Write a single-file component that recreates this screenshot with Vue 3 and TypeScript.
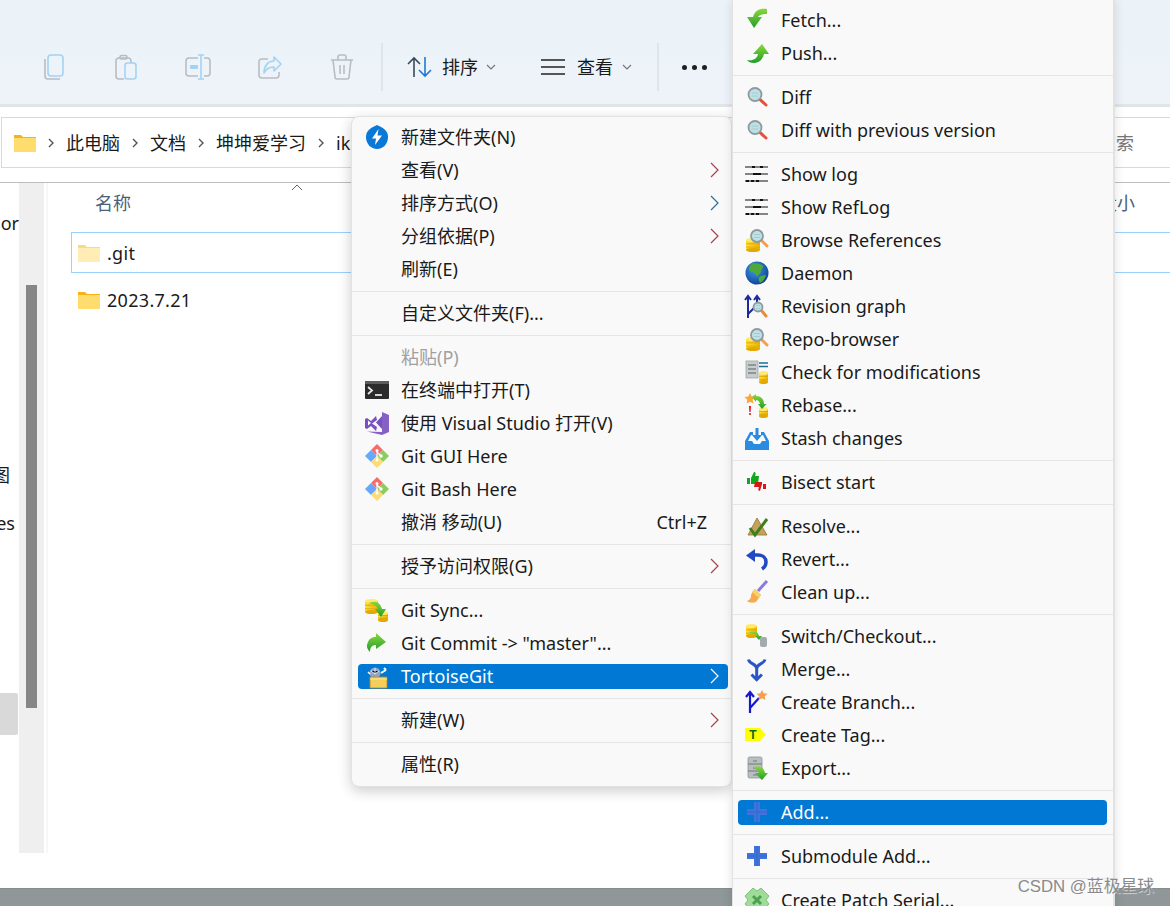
<script setup lang="ts">
interface Row {
  label?: string
  icon?: string
  arrow?: string
  keys?: string
  off?: boolean
  on?: boolean
  sep?: boolean
}

const db = (x: number, y: number, w: number, h: number) =>
  `<rect x="${x}" y="${y + 2}" width="${w}" height="${h - 3}" fill="url(#g-yellow)"/>` +
  `<ellipse cx="${x + w / 2}" cy="${y + h - 1}" rx="${w / 2}" ry="2" fill="#e3a900"/>` +
  `<ellipse cx="${x + w / 2}" cy="${y + 2}" rx="${w / 2}" ry="2" fill="#ffe970"/>` +
  `<path d="M${x} ${y + h * 0.45}h${w}M${x} ${y + h * 0.7}h${w}" stroke="#d9a200" stroke-width=".8"/>`

const lens = (cx: number, cy: number, r: number, handle: string, ex: number, ey: number) =>
  `<path d="M${cx + r * 0.7} ${cy + r * 0.7}L${ex} ${ey}" stroke="${handle}" stroke-width="3" stroke-linecap="round"/>` +
  `<circle cx="${cx}" cy="${cy}" r="${r}" fill="#bfe0e4" stroke="#8d9a9e" stroke-width="1.8"/>` +
  `<path d="M${cx - r * 0.5} ${cy - 1.5}h${r}M${cx - r * 0.5} ${cy + 1.5}h${r}" stroke="#9cc6cc" stroke-width=".8"/>`

const gitMark =
  '<path d="M12 12L6 6 0 12l6 6z" fill="#67a8ff"/><path d="M6 6l6 6 6-6-6-6z" fill="#f56c6c"/>' +
  '<path d="M12 12l6-6 6 6-6 6z" fill="#8ccb5e"/><path d="M6 18l6-6 6 6-6 6z" fill="#fddc75"/>' +
  '<circle cx="12" cy="6.5" r="1.5" fill="#fff"/><circle cx="16" cy="12" r="1.7" fill="#fff"/><circle cx="12" cy="16" r="1.5" fill="#fff"/>' +
  '<path d="M12 7v8M12 8l4 4" stroke="#fff" stroke-width="1.2"/>'

const plus = '<path d="M9 2h6v7h7v6h-7v7H9v-7H2V9h7z" fill="#3f74dc"/><path d="M2 12h20M12 2v20" stroke="#2f5fc4" stroke-width="1" opacity=".5"/>'

const logLines =
  '<path d="M0 5h23M0 12h23M0 19h23" stroke="#111" stroke-width="1"/>' +
  '<path d="M7 5h3M15 5h3M8 12h8M1 19h3M6 19h3M11 19h3" stroke="#111" stroke-width="2.200"/>'

const icons: Record<string, string> = {
  bolt: '<path d="M12 0l4 2c4 2 7 5 7 10 0 7-5 12-11 12S1 19 1 12c0-5 3-8 7-10z" fill="#0a78d7"/><path d="M13.500 4L7 13.500h4L10 20l7-9.500h-4.500z" fill="#fff"/>',
  term: '<rect y="3" width="24" height="18" rx="1" fill="#2b2b2b"/><path d="M0 4a1 1 0 0 1 1-1h22a1 1 0 0 1 1 1v2H0z" fill="#5c5c5c"/><path d="M3 9l4 3.500-4 3.500" fill="none" stroke="#e8e8e8" stroke-width="1.800"/><path d="M10 17h7" stroke="#e8e8e8" stroke-width="1.800"/>',
  vs: '<path d="M17 1l7 3v17l-7 3-15-3.500L17 21z" fill="#8661c5"/><path d="M17 5v13l-6-6.500zM0 8l2-1 4 3 5-5 1 4-5 3.500 5 3.500-1 4-5-5-4 3-2-1z" fill="#7a4fc0"/><path d="M3 9.500v5l3-2.500z" fill="#fff"/>',
  git: gitMark,
  sync: db(0, 1, 13, 14) + db(13, 13, 10, 10) + '<path d="M4 5c6-3 11-1 13 6h4l-5 8-6-8h3c-1-3-4-5-9-6z" fill="url(#g-green)"/>',
  commit: '<path d="M11 2l10 9-10 7v-4c-4 0-6 2-6 7-3-3-4-6-2-10 1-3 4-5 8-5z" fill="url(#g-green)"/>',
  tortoise: '<circle cx="10" cy="9" r="5.500" fill="#8fa6c9"/><path d="M6 7l4 3 4-3M10 4v6" stroke="#e8eef6" stroke-width="1"/><path d="M16 9l5-3M19 4l2 2" stroke="#fff" stroke-width="2"/><path d="M3 8l2 2" stroke="#fff" stroke-width="1.500"/><path d="M5 13h17v11H5z" fill="#f3ce5a" stroke="#a98a24" stroke-width=".8"/><path d="M5 15h17" stroke="#ffe88f"/>',
  fetch: '<path d="M22 1c-7-1-12 1-14 8H2l7 11 8-11h-4c1-2 4-3 9-3z" fill="url(#g-green)"/>',
  push: '<path d="M17 3l7 10h-5c-1 5-5 9-10 9-3 0-6-1-7-3 6 1 10-1 11-6h-5z" fill="url(#g-green)"/>',
  diff: lens(10, 9.500, 6.500, '#e5503f', 21, 20),
  log: logLines,
  refs: db(1, 10, 14, 13) + lens(12, 8, 6, '#f0a050', 22, 18),
  globe: '<circle cx="12" cy="12" r="11.500" fill="url(#g-globe)"/><path d="M8 2c3 1 8 0 10 3 1 2-2 3-2 5 0 3-3 3-3 6-2-1-3-4-5-5-2 0-4-1-4-3 0-3 2-4 4-6zM14 16c2-1 5-2 7-2-1 4-3 6-6 8-1-2-2-4-1-6z" fill="#4fa83c"/>',
  graph: '<path d="M3 24V3M0 6l3-4 3 4M12 12V3M9 6l3-4 3 4" fill="none" stroke="#1b2a9c" stroke-width="2"/><path d="M3 20l6-6" stroke="#1b2a9c" stroke-width="2"/>' + lens(13, 13, 4.500, '#e88c3a', 21, 22),
  check: '<rect x="1" y="1" width="12" height="17" fill="#c7ccce" stroke="#a0a6a8" stroke-width=".8"/><path d="M3 5h8M3 9h8M3 13h8" stroke="#7f8587" stroke-width="1.500"/><path d="M14 3h9M14 6.500h9" stroke="#1f6f95" stroke-width="1.600"/>' + db(14, 11, 9, 12),
  rebase: '<path d="M5 0l1.700 3.500 3.800.500-2.800 2.700.7 3.800L5 8.700 1.600 10.500l.7-3.800L-.5 4l3.800-.500z" fill="#f5a93a"/><path d="M4 13h2l-.4 6H4.400zM4.200 20h1.600v2H4.200z" fill="#e01818"/>' + db(14, 14, 9, 10) + '<path d="M7 4l4-3v2c5 0 8 3 8 8h2.500L17 16l-4-5h2c0-2-2-4-4-4v2z" fill="url(#g-green)"/>',
  stash: '<path d="M5 6h3v3H6L3 15v8h18v-8l-3-6h-2V6h3l5 9v9H0v-9z" fill="#2a8be0"/><path d="M0 15h7l2 3h6l2-3h7v8H0z" fill="#2a8be0"/><path d="M10.500 2h3v7h3.500l-5 6-5-6h3.500z" fill="#2a8be0"/>',
  bisect: '<path d="M2 8h3v6H2zM6 8l3-6c2 0 2 2 1 4h4l-1 8H6z" fill="#11a81c"/><path d="M21 14h-3v5h3zM17 14l-2 7c-2 0-2-2-1-4h-5l1-5h7z" fill="#d81818"/>',
  resolve: '<path d="M12 4l10 17H3z" fill="#c5a25a" stroke="#8f7538" stroke-width=".8"/><path d="M5 14l5 7L22 5" fill="none" stroke="#3f7d22" stroke-width="3"/>',
  revert: '<path d="M8 8h5c5 0 8 3 8 7 0 3-1 5-4 7" fill="none" stroke="#2149c2" stroke-width="3.500"/><path d="M1 8.500L10 2v13z" fill="#2149c2"/>',
  clean: '<path d="M22 1L13 11" stroke="#8a79e0" stroke-width="3"/><path d="M10 9l6 6-5 7c-3 1-7 1-9-1 3-1 4-3 4-5 0-3 2-5 4-7z" fill="#f6a94e"/><path d="M10 9l6 6-2 3-7-6z" fill="#f5d36a"/>',
  switch: db(1, 0, 11, 13) + '<rect x="15" y="13" width="7" height="10" rx="2" fill="#a5abad"/><path d="M5 8c5-2 8 0 9 4h3l-3 4-4-4h2c-1-2-4-3-7-3z" fill="url(#g-green)"/>',
  merge: '<path d="M3.500 2.500c1 5 8 4 8.200 9 .2-5 7.300-4 8.300-9M11.700 11v11M6.500 17.500l5.200 5.200 5.200-5.200" fill="none" stroke="#2a55c4" stroke-width="3"/>',
  branch: '<path d="M5 23V3M1 7l4-5 4 5M5 18l9-10" fill="none" stroke="#1518d0" stroke-width="2.200"/><path d="M17 0l1.700 3.300 3.800.500-2.800 2.600.7 3.700L17 8.300l-3.400 1.800.7-3.700-2.800-2.600 3.800-.500z" fill="#f5a050"/>',
  tag: '<path d="M0 5h15l6 6.500-6 6.500H0z" fill="#ffff00"/><text x="8" y="16" font-size="12" font-weight="700" text-anchor="middle" fill="#0b6b1e" font-family="Liberation Sans, sans-serif">T</text>',
  export: '<rect x="3" y="1" width="14" height="21" rx="1.500" fill="#b9bec0" stroke="#8e9496" stroke-width=".8"/><path d="M3 8h14M3 15h14M8 5h4M8 12h4M8 19h4" stroke="#74797b"/><path d="M8 11c6-2 11 0 12 6h3l-6 7-7-7h4c-1-2-3-4-6-6z" fill="url(#g-green)"/>',
  add: plus,
  patch: '<path d="M12 3l4-3 8 8-3 4 3 4-8 8-4-3-4 3-8-8 3-4-3-4 8-8z" fill="#9fdc9a" stroke="#6cb86a" stroke-width=".8"/><path d="M8 8l8 8M16 8l-8 8" stroke="#4fa04f" stroke-width="3"/>',
}

const sep: Row = { sep: true }
const red = '#a8424a'
const blue = '#2c6d9e'

const shellRows: Row[] = [
  { label: '新建文件夹(N)', icon: 'bolt' },
  { label: '查看(V)', arrow: red },
  { label: '排序方式(O)', arrow: blue },
  { label: '分组依据(P)', arrow: red },
  { label: '刷新(E)' },
  sep,
  { label: '自定义文件夹(F)...' },
  sep,
  { label: '粘贴(P)', off: true },
  { label: '在终端中打开(T)', icon: 'term' },
  { label: '使用 Visual Studio 打开(V)', icon: 'vs' },
  { label: 'Git GUI Here', icon: 'git' },
  { label: 'Git Bash Here', icon: 'git' },
  { label: '撤消 移动(U)', keys: 'Ctrl+Z' },
  sep,
  { label: '授予访问权限(G)', arrow: red },
  sep,
  { label: 'Git Sync...', icon: 'sync' },
  { label: 'Git Commit -> "master"...', icon: 'commit' },
  { label: 'TortoiseGit', icon: 'tortoise', arrow: '#fff', on: true },
  sep,
  { label: '新建(W)', arrow: red },
  sep,
  { label: '属性(R)' },
]

const gitRows: Row[] = [
  { label: 'Fetch...', icon: 'fetch' },
  { label: 'Push...', icon: 'push' },
  sep,
  { label: 'Diff', icon: 'diff' },
  { label: 'Diff with previous version', icon: 'diff' },
  sep,
  { label: 'Show log', icon: 'log' },
  { label: 'Show RefLog', icon: 'log' },
  { label: 'Browse References', icon: 'refs' },
  { label: 'Daemon', icon: 'globe' },
  { label: 'Revision graph', icon: 'graph' },
  { label: 'Repo-browser', icon: 'refs' },
  { label: 'Check for modifications', icon: 'check' },
  { label: 'Rebase...', icon: 'rebase' },
  { label: 'Stash changes', icon: 'stash' },
  sep,
  { label: 'Bisect start', icon: 'bisect' },
  sep,
  { label: 'Resolve...', icon: 'resolve' },
  { label: 'Revert...', icon: 'revert' },
  { label: 'Clean up...', icon: 'clean' },
  sep,
  { label: 'Switch/Checkout...', icon: 'switch' },
  { label: 'Merge...', icon: 'merge' },
  { label: 'Create Branch...', icon: 'branch' },
  { label: 'Create Tag...', icon: 'tag' },
  { label: 'Export...', icon: 'export' },
  sep,
  { label: 'Add...', icon: 'add', on: true },
  sep,
  { label: 'Submodule Add...', icon: 'add' },
  sep,
  { label: 'Create Patch Serial...', icon: 'patch' },
]

const menus = [
  { name: 'shell', rows: shellRows },
  { name: 'git', rows: gitRows },
]

const crumbs = ['此电脑', '文档', '坤坤爱学习', 'ikun']
</script>

<template>
  <div class="window">
    <svg class="defs" width="0" height="0">
      <defs>
        <linearGradient id="g-green" x1="0" y1="0" x2="0" y2="1">
          <stop offset="0" stop-color="#8ad83a" />
          <stop offset="1" stop-color="#1f9e2a" />
        </linearGradient>
        <linearGradient id="g-yellow" x1="0" y1="0" x2="1" y2="0">
          <stop offset="0" stop-color="#ffe03a" />
          <stop offset="1" stop-color="#efb400" />
        </linearGradient>
        <radialGradient id="g-globe" cx="0.4" cy="0.35" r="0.7">
          <stop offset="0" stop-color="#3d9be8" />
          <stop offset="1" stop-color="#0d3f94" />
        </radialGradient>
      </defs>
    </svg>

    <header class="toolbar">
      <button class="tool">
        <svg width="28" height="28" viewBox="0 0 28 28" fill="none" stroke-width="1.6">
          <path d="M5 6v17a3 3 0 0 0 3 3h12" stroke="#b9bdc1" />
          <rect x="8" y="2" width="15" height="21" rx="3" stroke="#a3d2f5" />
        </svg>
      </button>
      <button class="tool">
        <svg width="28" height="28" viewBox="0 0 28 28" fill="none" stroke-width="1.6">
          <path d="M12 26H7a3 3 0 0 1-3-3V8a3 3 0 0 1 3-3h9a3 3 0 0 1 3 3v2" stroke="#b9bdc1" />
          <rect x="8" y="2.500" width="7" height="3.500" rx="1.500" stroke="#b9bdc1" />
          <rect x="13" y="10" width="11" height="16" rx="2.500" stroke="#a3d2f5" />
        </svg>
      </button>
      <button class="tool">
        <svg width="28" height="28" viewBox="0 0 28 28" fill="none" stroke-width="1.6">
          <path d="M14 5H5a3 3 0 0 0-3 3v12a3 3 0 0 0 3 3h9M20 5h3a3 3 0 0 1 3 3v12a3 3 0 0 1-3 3h-3" stroke="#b9bdc1" />
          <path d="M17 2v24M14 2h6M14 26h6" stroke="#a3d2f5" />
          <rect x="6" y="12" width="8" height="4" rx="1" fill="#a3d2f5" />
        </svg>
      </button>
      <button class="tool">
        <svg width="28" height="28" viewBox="0 0 28 28" fill="none" stroke-width="1.6">
          <path d="M12 6H6a3 3 0 0 0-3 3v13a3 3 0 0 0 3 3h14a3 3 0 0 0 3-3v-3" stroke="#b9bdc1" />
          <path d="M18 4l7 7-7 7v-4c-5 0-8 2-10 6 0-7 4-12 10-12z" stroke="#a3d2f5" stroke-linejoin="round" />
        </svg>
      </button>
      <button class="tool">
        <svg width="28" height="28" viewBox="0 0 28 28" fill="none" stroke="#b9bdc1" stroke-width="1.6">
          <path d="M3 7h22M10 7V4a2 2 0 0 1 2-2h4a2 2 0 0 1 2 2v3M5 7l2 17a2 2 0 0 0 2 2h10a2 2 0 0 0 2-2l2-17M12 12v9M16 12v9" />
        </svg>
      </button>
      <i class="divider first"></i>
      <button class="cmd sort">
        <svg width="30" height="24" viewBox="0 0 30 24" fill="none" stroke-width="1.600">
          <path d="M7 22V3M1 9l6-6 6 6" stroke="#3b4a5a" />
          <path d="M18 2v19M12 15l6 6 6-6" stroke="#1f7ad2" />
        </svg>
        <span>排序</span>
        <svg class="caret" width="10" height="6" viewBox="0 0 10 6" fill="none" stroke="#777" stroke-width="1.200">
          <path d="M1 1l4 4 4-4" />
        </svg>
      </button>
      <button class="cmd view">
        <svg width="24" height="16" viewBox="0 0 24 16" fill="none" stroke="#555" stroke-width="1.800">
          <path d="M0 1h24M0 8h24M0 15h24" />
        </svg>
        <span>查看</span>
        <svg class="caret" width="10" height="6" viewBox="0 0 10 6" fill="none" stroke="#777" stroke-width="1.200">
          <path d="M1 1l4 4 4-4" />
        </svg>
      </button>
      <i class="divider"></i>
      <div class="dots"><i></i><i></i><i></i></div>
    </header>

    <div class="address">
      <svg class="folder" width="22" height="18" viewBox="0 0 22 18">
        <path d="M0 1h7l2 2h13v3H0z" fill="#f7b21a" />
        <path d="M0 4h22v14H0z" fill="#ffdc6e" />
      </svg>
      <template v-for="c in crumbs" :key="c">
        <svg class="chev" width="6" height="10" viewBox="0 0 6 10" fill="none" stroke="#555" stroke-width="1.400">
          <path d="M1 1l4 4-4 4" />
        </svg>
        <span>{{ c }}</span>
      </template>
      <span class="search">搜索</span>
    </div>

    <main class="content">
      <aside class="side">
        <span class="side-item a">sor</span>
        <span class="side-item b">图</span>
        <span class="side-item c">es</span>
        <span class="side-sel"></span>
      </aside>
      <div class="scroll"><div class="thumb"></div></div>
      <div class="strip"></div>
      <section class="list">
        <div class="list-head">
          <span>名称</span>
          <svg class="sort-mark" width="12" height="7" viewBox="0 0 12 7" fill="none" stroke="#666" stroke-width="1">
            <path d="M1 6l5-5 5 5" />
          </svg>
          <span>大小</span>
        </div>
        <div class="file picked">
          <svg class="dim" width="22" height="18" viewBox="0 0 22 18">
            <path d="M0 1h7l2 2h13v3H0z" fill="#f7b21a" />
            <path d="M0 4h22v14H0z" fill="#ffdc6e" />
          </svg>
          <span>.git</span>
        </div>
        <div class="file">
          <svg width="22" height="18" viewBox="0 0 22 18">
            <path d="M0 1h7l2 2h13v3H0z" fill="#f7b21a" />
            <path d="M0 4h22v14H0z" fill="#ffdc6e" />
          </svg>
          <span>2023.7.21</span>
        </div>
      </section>
    </main>
    <footer class="taskbar"></footer>

    <nav v-for="m in menus" :key="m.name" class="menu" :class="m.name">
      <template v-for="(r, i) in m.rows" :key="i">
        <hr v-if="r.sep" class="rule" />
        <div v-else class="row" :class="{ on: r.on, off: r.off }">
          <svg v-if="r.icon" class="ico" width="24" height="24" viewBox="0 0 24 24" v-html="icons[r.icon]"></svg>
          <span v-else class="ico"></span>
          <span class="label">{{ r.label }}</span>
          <span v-if="r.keys" class="keys">{{ r.keys }}</span>
          <svg v-if="r.arrow" class="more" width="9" height="16" viewBox="0 0 9 16" fill="none" :stroke="r.arrow" stroke-width="1.200">
            <path d="M1 1l7 7-7 7" />
          </svg>
        </div>
      </template>
    </nav>

    <div class="mark">CSDN @蓝极星球</div>
  </div>
</template>

<style scoped>
.window {
  position: relative;
  width: 1170px;
  height: 906px;
  overflow: hidden;
  display: flex;
  flex-direction: column;
  background: #fff;
  color: #1a1a1a;
  font-family: 'Noto Sans', 'Noto Sans CJK SC', sans-serif;
  font-size: 18px;
  line-height: 24px;
}

.defs {
  position: absolute;
}

.toolbar {
  height: 107px;
  flex: none;
  display: flex;
  align-items: center;
  padding: 30px 0 0 18px;
  box-sizing: border-box;
  background: linear-gradient(#ebf3f8, #eef3f9);
  border-bottom: 3px solid #e0e5e8;
}

.tool {
  width: 72px;
  height: 48px;
  border: 0;
  padding: 0;
  background: none;
  display: flex;
  align-items: center;
  justify-content: center;
}

.divider {
  width: 2px;
  height: 48px;
  background: #e0e4e8;
}

.divider.first {
  margin-left: 3px;
}

.cmd {
  display: flex;
  align-items: center;
  border: 0;
  padding: 0;
  background: none;
  font: inherit;
  color: #1a1a1a;
}

.sort {
  margin-left: 24px;
}

.sort span {
  margin-left: 5px;
}

.sort .caret {
  margin-left: 8px;
}

.view {
  margin-left: 45px;
}

.view span {
  margin-left: 12px;
}

.caret {
  margin-left: 9px;
}

.view + .divider {
  margin-left: 25px;
}

.dots {
  display: flex;
  gap: 5px;
  margin-left: 23px;
}

.dots i {
  width: 5px;
  height: 5px;
  border-radius: 50%;
  background: #1f1f1f;
}

.address {
  height: 49px;
  margin: 10px 0 14px 1px;
  padding-left: 12px;
  display: flex;
  align-items: center;
  gap: 12px;
  flex: none;
  border: 1px solid #d9d9d9;
  border-right: 0;
  white-space: nowrap;
}

.search {
  margin-left: auto;
  padding-right: 36px;
  color: #777;
}

.content {
  flex: 1;
  min-height: 0;
  display: flex;
  border-top: 1px solid #bdbdbd;
}

.side {
  width: 19px;
  flex: none;
  display: flex;
  flex-direction: column;
  overflow: hidden;
}

.side-item {
  height: 24px;
  flex: none;
  display: flex;
  justify-content: flex-end;
  white-space: nowrap;
}

.side-item.a {
  margin-top: 28px;
}

.side-item.b {
  margin-top: 228px;
  padding-right: 9px;
}

.side-item.c {
  margin-top: 24px;
  padding-right: 4px;
}

.side-sel {
  flex: none;
  width: 18px;
  height: 42px;
  margin-top: 158px;
  background: #d9d9d9;
  border-radius: 0 2px 2px 0;
}

.scroll {
  width: 25px;
  height: 670px;
  flex: none;
  background: #efefef;
}

.thumb {
  width: 11px;
  height: 423px;
  margin: 0 0 0 7px;
  position: relative;
  top: 102px;
  background: #868686;
}

.strip {
  width: 2px;
  height: 670px;
  margin-left: 2px;
  flex: none;
  background: #f7f7f7;
}

.list {
  flex: 1;
  min-width: 0;
  position: relative;
}

.list-head {
  height: 40px;
  margin-bottom: 9px;
  padding: 0 35px 0 47px;
  display: flex;
  align-items: center;
  justify-content: space-between;
  color: #4c607a;
}

.sort-mark {
  position: absolute;
  left: 243px;
  top: 1px;
}

.file {
  height: 40px;
  margin: 0 0 7px 23px;
  padding-left: 6px;
  display: flex;
  align-items: center;
  gap: 7px;
  box-sizing: border-box;
  border: 1px solid transparent;
  border-right: 0;
  letter-spacing: 0.3px;
}

.file.picked {
  height: 41px;
  border-color: #99d1ff;
  border-radius: 1px 0 0 1px;
}

.dim {
  opacity: 0.5;
}

.taskbar {
  height: 18px;
  flex: none;
  background: #8f9799;
  border-top: 1px solid #868d8f;
  box-sizing: border-box;
}

.menu {
  position: absolute;
  box-sizing: border-box;
  display: flex;
  flex-direction: column;
  background: #f9f9f9;
  border: 1px solid #e2e2e2;
  box-shadow: 0 4px 14px rgba(0, 0, 0, 0.2);
}

.menu.shell {
  left: 351px;
  top: 116px;
  width: 381px;
  padding: 3.5px 0 5px;
  border-radius: 8px;
}

.menu.git {
  left: 732px;
  top: -4.5px;
  width: 383px;
  padding: 7px 0 5px;
  border-right-width: 2px;
  box-shadow: 0 4px 10px rgba(0, 0, 0, 0.12);
}

.row {
  height: 25px;
  flex: none;
  margin: 4px 5px;
  padding-left: 7px;
  display: flex;
  align-items: center;
  border-radius: 4px;
  white-space: nowrap;
}

.shell .row {
  margin-left: 6px;
  margin-right: 3px;
}

.git .row {
  margin-right: 6px;
}

.row.on {
  background: #0078d4;
  color: #fff;
}

.row.off {
  color: #a0a0a0;
}

.ico {
  width: 24px;
  height: 24px;
  flex: none;
  margin-right: 12px;
  overflow: visible;
}

.label {
  flex: 1;
}

.keys {
  padding-right: 21px;
}

.more {
  margin-right: 9px;
  flex: none;
}

.rule {
  height: 1px;
  flex: none;
  align-self: stretch;
  margin: 5px 0;
  border: 0;
  background: #e5e5e5;
}

.mark {
  position: absolute;
  right: 16px;
  bottom: 8px;
  color: #8a8a8a;
  font-family: 'Liberation Sans', 'Noto Sans CJK SC', sans-serif;
  font-size: 16.8px;
  line-height: 22px;
  text-shadow: 1px 1px 1px rgba(255, 255, 255, 0.6);
}
</style>
